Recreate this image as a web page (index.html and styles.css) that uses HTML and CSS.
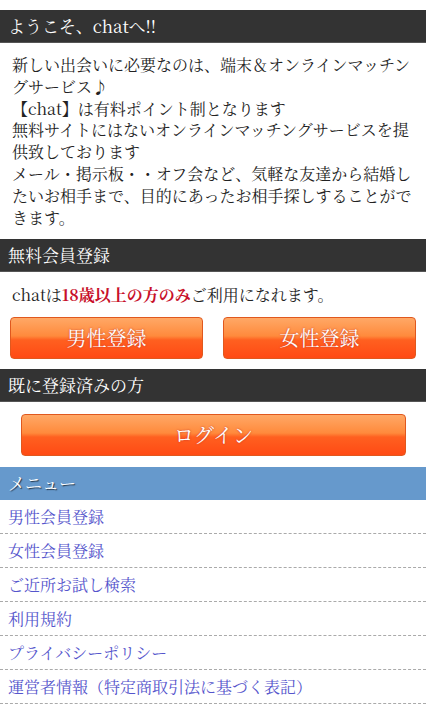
FILE: index.html
```html
<!DOCTYPE html>
<html lang="ja">
<head>
    <meta charset="UTF-8">
    <meta name="viewport" content="width=device-width, initial-scale=1.0">
    <title>chat</title>
    <link rel="stylesheet" href="styles.css">
</head>
<body>
    <h2 class="bar">ようこそ、chatへ!!</h2>
    <div class="intro">
        <p>新しい出会いに必要なのは、端末＆オンラインマッチングサービス♪</p>
        <p>【chat】は有料ポイント制となります</p>
        <p>無料サイトにはないオンラインマッチングサービスを提供致しております</p>
        <p>メール・掲示板・・オフ会など、気軽な友達から結婚したいお相手まで、目的にあったお相手探しすることができます。</p>
    </div>

    <h2 class="bar">無料会員登録</h2>
    <p class="notice">chatは<span class="red">18歳以上の方のみ</span>ご利用になれます。</p>
    <div class="reg-buttons">
        <a href="#" class="btn">男性登録</a>
        <a href="#" class="btn">女性登録</a>
    </div>

    <h2 class="bar">既に登録済みの方</h2>
    <div class="login-wrap">
        <a href="#" class="btn">ログイン</a>
    </div>

    <h2 class="bar menu-bar">メニュー</h2>
    <ul class="menu">
        <li><a href="#">男性会員登録</a></li>
        <li><a href="#">女性会員登録</a></li>
        <li><a href="#">ご近所お試し検索</a></li>
        <li><a href="#">利用規約</a></li>
        <li><a href="#">プライバシーポリシー</a></li>
        <li><a href="#">運営者情報（特定商取引法に基づく表記）</a></li>
    </ul>
</body>
</html>
```

FILE: styles.css
```css
* {
    margin: 0;
    padding: 0;
    box-sizing: border-box;
}

body {
    font-family: "Noto Serif CJK JP", "Liberation Serif", "Noto Sans CJK JP", serif;
    color: #222;
    background: #fff;
    padding-top: 10px;
}

.bar {
    background-color: #333;
    color: #fff;
    font-size: 17px;
    font-weight: normal;
    height: 33px;
    line-height: 32px;
    padding-left: 8px;
    border-bottom: 1px solid #555;
}

.intro {
    padding: 11px 12px 11px 12px;
    font-size: 16px;
    line-height: 21.8px;
}

.notice {
    font-size: 16px;
    line-height: 22px;
    padding: 12px 12px 0 12px;
}

.red {
    color: #c8102a;
    font-weight: bold;
}

.reg-buttons {
    display: grid;
    grid-template-columns: 1fr 1fr;
    gap: 20px;
    padding: 11px 10px 10px 10px;
}

.btn {
    display: block;
    height: 42px;
    line-height: 40px;
    text-align: center;
    color: #fff;
    font-size: 20px;
    text-decoration: none;
    border: 1px solid #e0581e;
    border-radius: 4px;
    background: linear-gradient(#ffa866 0%, #ff8a3c 45%, #ff6020 55%, #ff4a14 100%);
    text-shadow: 0 0 2px #b33;
}

.login-wrap {
    padding: 12px 20px 11px 21px;
}

.menu-bar {
    background-color: #6699cc;
    border-bottom: none;
    text-shadow: 1px 1px 1px #234;
}

.menu {
    list-style: none;
}

.menu li {
    height: 34px;
    line-height: 34px;
    border-bottom: 1px dashed #aaa;
    padding-left: 8px;
    font-size: 16px;
}

.menu a {
    color: #5555cc;
    text-decoration: none;
}
```
